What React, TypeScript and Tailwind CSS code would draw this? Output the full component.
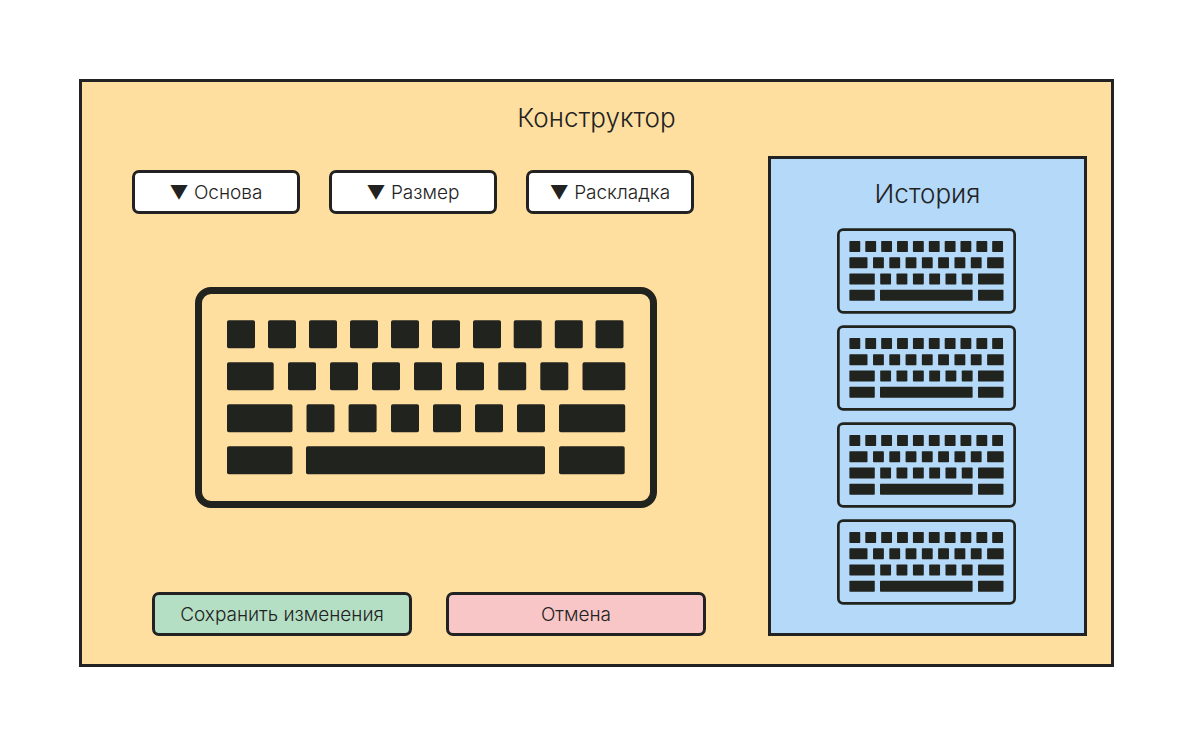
import React from "react";

const topRow = [32, 73, 114, 155, 196, 237, 278, 318.7, 359.8, 400.5];

const lowerKeys: { x: number; y: number; w: number }[] = [
  { x: 32, y: 75, w: 46.7 },
  ...[93, 135, 177, 219, 261, 303.2, 345.3].map((x) => ({ x, y: 75, w: 28 })),
  { x: 387.5, y: 75, w: 42.8 },
  { x: 32, y: 117, w: 65.5 },
  ...[111.5, 153.6, 196, 238, 280, 322].map((x) => ({ x, y: 117, w: 28 })),
  { x: 364, y: 117, w: 66.2 },
  { x: 32, y: 159, w: 65.5 },
  { x: 111, y: 159, w: 239 },
  { x: 364, y: 159, w: 65.7 },
];

const keys = [...topRow.map((x) => ({ x, y: 33, w: 28 })), ...lowerKeys];

function Keyboard({ className, label }: { className: string; label: string }) {
  return (
    <svg viewBox="0 0 462 221" className={className} role="img" aria-label={label}>
      <rect x="3.5" y="3.5" width="455" height="214" rx="12.5" fill="none" stroke="#21231e" strokeWidth="7" />
      {keys.map((k) => (
        <rect key={`${k.x}-${k.y}`} x={k.x} y={k.y + 0.2} width={k.w} height="28" rx="1.8" fill="#21231e" />
      ))}
    </svg>
  );
}

function Dropdown({ label }: { label: string }) {
  return (
    <select
      aria-label={label}
      className="h-11 w-full max-w-[168px] cursor-pointer appearance-none rounded-[7px] border-3 border-[#222222] bg-white pt-0.5 text-center text-[19px] leading-6 font-light text-[#222222]"
    >
      <option>▼ {label}</option>
    </select>
  );
}

export default function App() {
  return (
    <div className="bg-white p-[79px] font-['Inter',sans-serif] font-light text-[#222222]">
      <main className="border-3 border-[#222222] bg-[#ffdfa0] pt-5 pr-6 pb-7">
        <h1 className="mb-[22px] pl-6 text-center text-[26px] leading-8">Конструктор</h1>
        <div className="flex">
          <section className="flex flex-1 flex-col items-center pt-[14px] pl-0.5">
            <div className="flex w-full justify-center gap-[29px] pr-[26px]">
              <Dropdown label="Основа" />
              <Dropdown label="Размер" />
              <Dropdown label="Раскладка" />
            </div>
            <Keyboard className="mt-[73px] w-full max-w-[462px]" label="Клавиатура" />
            <div className="mt-auto flex w-full justify-center gap-[34px] pl-1.5">
              <button
                type="button"
                className="h-11 w-full max-w-[260px] rounded-[7px] border-3 border-[#222222] bg-[#b5dfc5] pt-0.5 text-[19px] leading-6"
              >
                Сохранить изменения
              </button>
              <button
                type="button"
                className="h-11 w-full max-w-[260px] rounded-[7px] border-3 border-[#222222] bg-[#f8c6c6] pt-0.5 text-[19px] leading-6"
              >
                Отмена
              </button>
            </div>
          </section>
          <aside className="w-[319px] shrink-0 border-3 border-[#222222] bg-[#b5d9f8] pt-[19px] pb-7">
            <h2 className="mb-[18px] text-center text-[26px] leading-8">История</h2>
            <ul className="flex flex-col items-center gap-[11px] pr-0.5">
              {[1, 2, 3, 4].map((n) => (
                <li key={n}>
                  <Keyboard className="h-[86px] w-[179px]" label={`Вариант ${n}`} />
                </li>
              ))}
            </ul>
          </aside>
        </div>
      </main>
    </div>
  );
}
